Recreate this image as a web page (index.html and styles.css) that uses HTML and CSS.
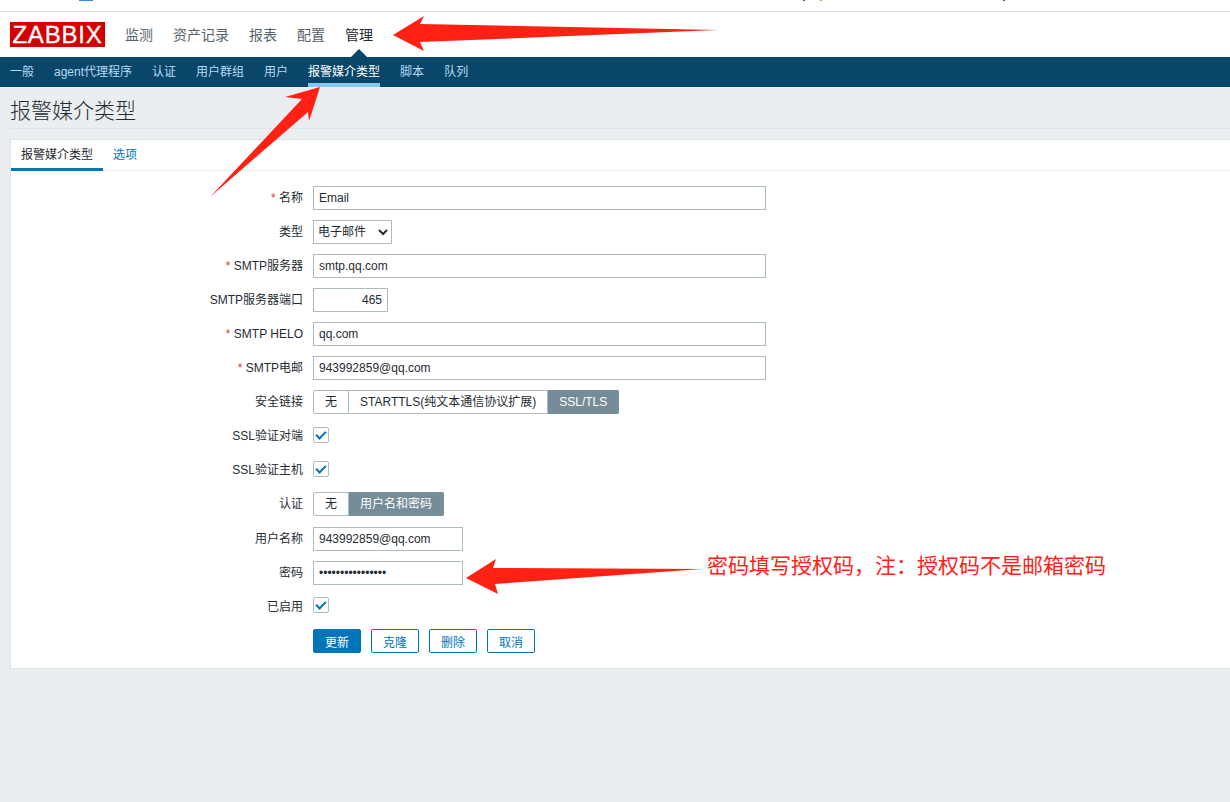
FILE: index.html
```html
<!DOCTYPE html>
<html lang="zh-CN">
<head>
    <meta charset="UTF-8">
    <meta name="viewport" content="width=device-width, initial-scale=1.0">
    <title>报警媒介类型</title>
    <link rel="stylesheet" href="styles.css">
</head>
<body>
    <div class="browser-strip">
        <svg class="strip-marks" width="1230" height="1" viewBox="0 0 1230 1">
            <rect x="79" y="0" width="14" height="1" fill="#2f8be6" />
            <rect x="803" y="0" width="2" height="1" fill="#3a5a80" />
            <rect x="820" y="0" width="2" height="1" fill="#e09a3c" />
            <rect x="1003" y="0" width="2" height="1" fill="#3a5a80" />
        </svg>
    </div>

    <header class="top-nav">
        <div class="logo">ZABBIX</div>
        <nav class="top-menu">
            <a>监测</a>
            <a>资产记录</a>
            <a>报表</a>
            <a>配置</a>
            <a class="current">管理</a>
        </nav>
    </header>

    <nav class="sub-nav">
        <a>一般</a>
        <a>agent代理程序</a>
        <a>认证</a>
        <a>用户群组</a>
        <a>用户</a>
        <a class="current">报警媒介类型</a>
        <a>脚本</a>
        <a>队列</a>
    </nav>

    <main class="content">
        <h1>报警媒介类型</h1>

        <section class="panel">
            <div class="tabs">
                <a class="current">报警媒介类型</a>
                <a>选项</a>
            </div>

            <form class="form">
                <label class="required">名称</label>
                <div class="field"><input class="wide" type="text" value="Email"></div>

                <label>类型</label>
                <div class="field">
                    <select class="select"><option>电子邮件</option></select>
                </div>

                <label class="required">SMTP服务器</label>
                <div class="field"><input class="wide" type="text" value="smtp.qq.com"></div>

                <label>SMTP服务器端口</label>
                <div class="field"><input class="port" type="text" value="465"></div>

                <label class="required">SMTP HELO</label>
                <div class="field"><input class="wide" type="text" value="qq.com"></div>

                <label class="required">SMTP电邮</label>
                <div class="field"><input class="wide" type="text" value="943992859@qq.com"></div>

                <label>安全链接</label>
                <div class="field">
                    <div class="segments">
                        <span>无</span>
                        <span>STARTTLS(纯文本通信协议扩展)</span>
                        <span class="on">SSL/TLS</span>
                    </div>
                </div>

                <label>SSL验证对端</label>
                <div class="field"><span class="check"></span></div>

                <label>SSL验证主机</label>
                <div class="field"><span class="check"></span></div>

                <label>认证</label>
                <div class="field">
                    <div class="segments">
                        <span>无</span>
                        <span class="on">用户名和密码</span>
                    </div>
                </div>

                <label class="after-segments">用户名称</label>
                <div class="field after-segments"><input class="short" type="text" value="943992859@qq.com"></div>

                <label>密码</label>
                <div class="field"><input class="short" type="password" value="1234567890123456"></div>

                <label>已启用</label>
                <div class="field"><span class="check last"></span></div>

                <div class="buttons">
                    <button type="button" class="primary">更新</button>
                    <button type="button">克隆</button>
                    <button type="button">删除</button>
                    <button type="button">取消</button>
                </div>
            </form>
        </section>
    </main>

    <!-- red annotations drawn over the screenshot -->
    <svg class="arrows" width="1230" height="802" viewBox="0 0 1230 802">
        <polygon points="393,35 424,16 420,24 718,30 420,42 424,51" />
        <polygon points="320,87 309,121 308,112 210,197 302,99 285,97" />
        <polygon points="466,578 496,559 493,568 702,569 495,584 498,594" />
    </svg>
    <div class="note">密码填写授权码，注：授权码不是邮箱密码</div>
</body>
</html>
```

FILE: styles.css
```css
body {
    font-family: Arial, "Liberation Sans", "Noto Sans CJK SC", sans-serif;
    font-size: 12px;
    color: #1f2c33;
    background-color: #ebeef0;
    margin: 0;
    padding: 0;
    min-height: 802px;
    overflow: hidden;
}
a {
    text-decoration: none;
}
.browser-strip {
    height: 11px;
    background-color: white;
    border-bottom: 1px solid #dcdcdc;
}
.strip-marks {
    display: block;
}
.top-nav {
    display: flex;
    align-items: center;
    height: 45px;
    background-color: white;
}
.logo {
    width: 95px;
    height: 25px;
    line-height: 25px;
    margin-left: 10px;
    background-color: #d40000;
    color: white;
    font-size: 24px;
    text-align: center;
    letter-spacing: 0.8px;
    -webkit-text-stroke: 0.3px white;
}
.top-menu {
    display: flex;
    align-self: stretch;
    margin-left: 10px;
}
.top-menu a {
    display: flex;
    align-items: center;
    padding: 0 10px;
    height: 43px;
    font-size: 14px;
    color: #55636b;
}
.top-menu a.current {
    position: relative;
    height: 45px;
    box-sizing: border-box;
    padding-bottom: 2px;
    color: #1f2c33;
}
.top-menu a.current::after {
    content: "";
    position: absolute;
    left: 50%;
    bottom: 0;
    margin-left: -8px;
    border-left: 8px solid transparent;
    border-right: 8px solid transparent;
    border-bottom: 8px solid #0a466a;
}
.sub-nav {
    display: flex;
    gap: 20px;
    height: 30px;
    padding-left: 10px;
    background-color: #0a466a;
}
.sub-nav a {
    line-height: 30px;
    color: #b5dcf2;
}
.sub-nav a.current {
    color: white;
    height: 26px;
    border-bottom: 4px solid #84c9f5;
}
.content {
    padding: 0 0 0 10px;
}
h1 {
    margin: 0 0 10px;
    padding: 11px 0 5px;
    font-size: 21px;
    font-weight: 300;
    line-height: 25px;
    border-bottom: 1px solid #dfe4e7;
}
.panel {
    background-color: white;
    border: 1px solid #dfe4e7;
    border-right: 0;
    height: 528px;
}
.tabs {
    display: flex;
    height: 30px;
    border-bottom: 1px solid #ebeef0;
}
.tabs a {
    padding: 0 10px;
    line-height: 30px;
    color: #0275b8;
}
.tabs a.current {
    color: #1f2c33;
    height: 28px;
    border-bottom: 3px solid #0275b8;
}
.form {
    display: grid;
    grid-template-columns: 292px 1fr;
    column-gap: 10px;
    row-gap: 10px;
    padding-top: 15px;
}
.form label {
    text-align: right;
    line-height: 24px;
}
.form label.required::before {
    content: "* ";
    color: #e33734;
}
.form .after-segments {
    margin-top: 1px;
}
.field {
    display: flex;
    align-items: center;
    min-height: 24px;
}
input {
    box-sizing: border-box;
    height: 24px;
    padding: 0 5px;
    border: 1px solid #acbbc2;
    background-color: white;
    color: #1f2c33;
    font-family: inherit;
    font-size: 12px;
}
input.wide {
    width: 453px;
}
input.short {
    width: 150px;
}
input.port {
    width: 75px;
    text-align: right;
}
.select {
    box-sizing: border-box;
    width: 79px;
    height: 24px;
    border: 1px solid #acbbc2;
    background-color: white;
    color: #1f2c33;
    font-family: inherit;
    font-size: 12px;
}
.segments {
    display: flex;
    height: 24px;
    box-sizing: border-box;
    border: 1px solid #acbbc2;
    border-radius: 2px;
}
.segments span {
    padding: 0 11px;
    line-height: 22px;
    border-right: 1px solid #acbbc2;
}
.segments span:last-child {
    border-right: 0;
}
.segments span.on {
    margin: -1px -1px -1px 0;
    padding-right: 12px;
    line-height: 24px;
    background-color: #768d99;
    color: white;
    border-radius: 0 2px 2px 0;
}
.check {
    position: relative;
    box-sizing: border-box;
    width: 16px;
    height: 16px;
    margin-bottom: 2px;
    border: 1px solid #acbbc2;
    border-radius: 2px;
}
.check.last {
    margin-bottom: 4px;
}
.check::after {
    content: "";
    position: absolute;
    left: 4px;
    top: 1px;
    width: 4px;
    height: 8px;
    border: solid #0275b8;
    border-width: 0 2px 2px 0;
    transform: rotate(45deg);
}
.buttons {
    grid-column: 2;
    display: flex;
    gap: 10px;
}
button {
    box-sizing: border-box;
    width: 48px;
    height: 24px;
    padding: 0;
    border: 1px solid #0275b8;
    border-radius: 2px;
    background-color: white;
    color: #0275b8;
    font-family: inherit;
    font-size: 12px;
}
button.primary {
    background-color: #0275b8;
    color: white;
}
.arrows {
    position: absolute;
    left: 0;
    top: 0;
    fill: #ff2114;
    pointer-events: none;
}
.note {
    position: absolute;
    left: 707px;
    top: 554px;
    font-size: 21px;
    line-height: 24px;
    color: #ff2114;
}
```
